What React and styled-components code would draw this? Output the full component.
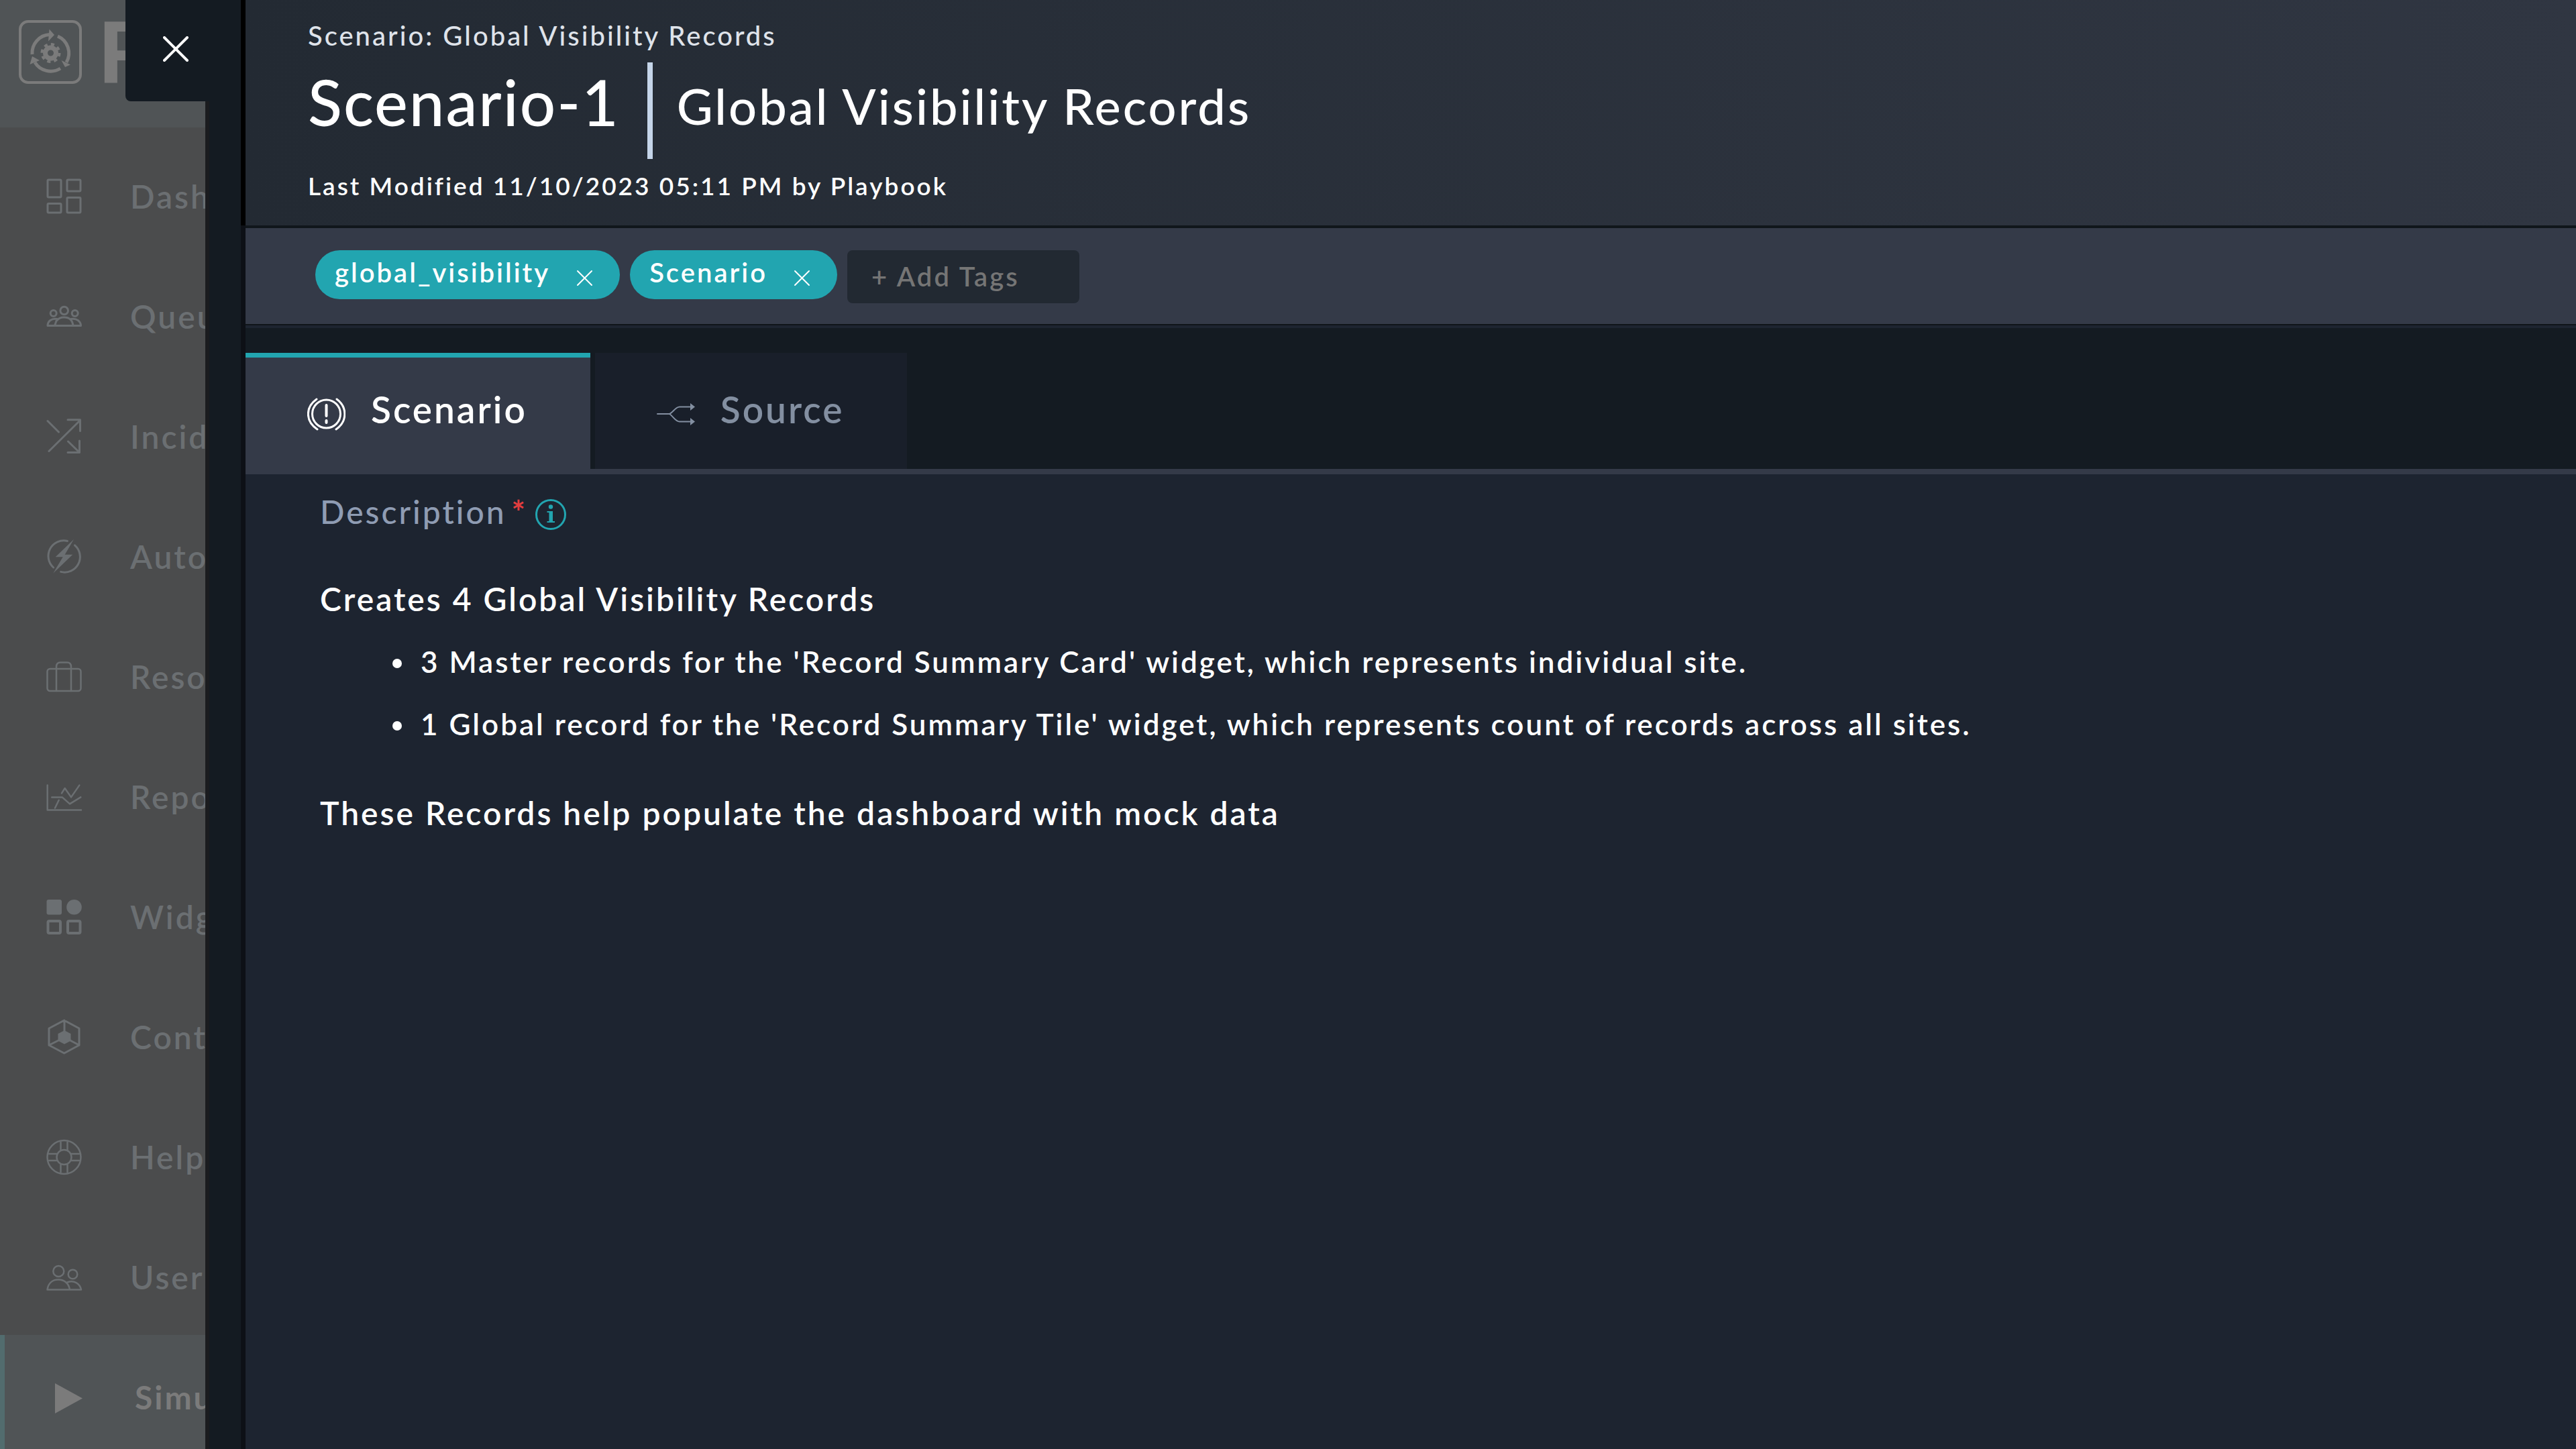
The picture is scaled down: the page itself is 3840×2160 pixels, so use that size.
import React, { useState } from "react";
import styled, { createGlobalStyle, css } from "styled-components";

const color = {
  teal: "#22a5b0",
  ink: "#141b22",
  panel: "#1d2430",
  bar: "#343a48",
  rail: "#4b4c4d",
  railRaised: "#505456",
  railText: "#6b6f72",
  muted: "#8f9cb3",
};

const GlobalStyle = createGlobalStyle`
  *, *::before, *::after { box-sizing: border-box; }
  body {
    margin: 0;
    background: ${color.panel};
    color: #fff;
    font-family: Lato, "Open Sans", sans-serif;
    font-weight: 600;
    letter-spacing: 3px;
  }
  button, input { font: inherit; letter-spacing: inherit; color: inherit; }
  h1, h2, p, ul { margin: 0; }
`;

const Page = styled.div`
  display: flex;
  height: 100vh;
  overflow: hidden;
`;

const Sidebar = styled.aside`
  flex: 0 0 306px;
  overflow: hidden;
  background: ${color.rail};
`;

const Brand = styled.div`
  display: flex;
  align-items: flex-start;
  gap: 25px;
  height: 190px;
  padding: 30px 0 0 28px;
  background: ${color.railRaised};
  color: #7b7b7b;
  font: 700 132px/95px "Liberation Sans", Arial, sans-serif;
`;

const NavList = styled.ul`
  padding: 10px 0 0;
  list-style: none;
`;

const NavLink = styled.a`
  display: flex;
  align-items: center;
  gap: 71px;
  height: 179px;
  padding: 7px 0 0 69px;
  color: ${color.railText};
  font-size: 48px;
  line-height: 60px;
  white-space: nowrap;
  text-decoration: none;

  svg { flex: none; }

  ${(p) =>
    p.$active &&
    css`
      border-left: 7px solid #526c6e;
      background: ${color.railRaised};
      color: #7b7b7b;
      font-weight: 700;
    `}
`;

const Gutter = styled.div`
  position: relative;
  flex: 0 0 53px;
  border-left: 6px solid #1b1c1f;
  background: ${color.ink};
`;

const CloseButton = styled.button`
  position: absolute;
  top: 0;
  right: 0;
  display: flex;
  align-items: center;
  width: 172px;
  height: 151px;
  padding: 0 0 6px 56px;
  border: 0;
  border-radius: 0 0 0 8px;
  background: ${color.ink};
  color: #fff;
`;

const Drawer = styled.main`
  display: flex;
  flex: 1;
  flex-direction: column;
  min-width: 0;
`;

const Header = styled.header`
  padding: 27px 93px 35px;
  border-left: 7px solid #000;
  background: linear-gradient(90deg, #232a33, #303642);
`;

const Crumb = styled.p`
  color: #dfe3ea;
  font-size: 40px;
  font-weight: 500;
  line-height: 52px;
`;

const TitleRow = styled.div`
  display: flex;
  align-items: flex-start;
  gap: 41px;
  margin: 14px 0 16px;
`;

const Title = styled.h1`
  font-size: 94px;
  font-weight: 500;
  letter-spacing: 2px;
  line-height: 118px;
`;

const Subtitle = styled.h2`
  padding: 0 0 14px 36px;
  border-left: 8px solid #c5d5e9;
  font-size: 74px;
  font-weight: 500;
  line-height: 130px;
`;

const Modified = styled.p`
  font-size: 37px;
  line-height: 48px;
`;

const Body = styled.div`
  flex: 1;
  border-left: 7px solid #0d1016;
  background: ${color.panel};
`;

const TagBar = styled.div`
  display: flex;
  align-items: flex-start;
  gap: 15px;
  padding: 33px 104px 31px;
  border-top: 4px solid #10161b;
  border-bottom: 2px solid #10151a;
  background: ${color.bar};
  font-size: 40px;
`;

const Tag = styled.span`
  display: flex;
  align-items: flex-start;
  gap: 39px;
  height: 73px;
  padding: 0 40px 0 29px;
  border-radius: 37px;
  background: ${color.teal};
  line-height: 67px;
`;

const TagRemove = styled.button`
  display: flex;
  padding: 29px 0 0;
  border: 0;
  background: none;
`;

const TagInput = styled.input`
  width: 346px;
  height: 79px;
  padding: 0 36px 2px;
  border: 0;
  border-radius: 8px;
  outline: 0;
  background: #222932;

  &::placeholder { color: #757575; opacity: 1; }
`;

const TabStrip = styled.div`
  display: flex;
  gap: 7px;
  margin-top: 4px;
  padding-top: 37px;
  border-bottom: 8px solid ${color.bar};
  background: ${color.ink};
`;

const Tab = styled.button`
  display: flex;
  align-items: center;
  gap: 38px;
  height: 173px;
  padding: 0 94px 0 92px;
  border: 0;
  border-top: 7px solid ${(p) => (p.$active ? color.teal : "transparent")};
  background: ${(p) => (p.$active ? color.bar : "#191f2a")};
  color: ${(p) => (p.$active ? "#fff" : "#838fa1")};
  font-size: 55px;
`;

const TabLabel = styled.span`
  padding-bottom: 12px;
  line-height: 68px;
`;

const Content = styled.section`
  padding: 26px 111px;
`;

const FieldLabel = styled.div`
  display: flex;
  align-items: center;
  margin-bottom: 70px;
  color: ${color.muted};
  font-size: 48px;
  font-weight: 500;
  line-height: 60px;
`;

const Required = styled.span`
  margin: 0 12px 0 8px;
  color: #e23d3f;
  font-weight: 700;
`;

const InfoButton = styled.button`
  display: flex;
  padding: 8px 0 0;
  border: 0;
  background: none;
  color: ${color.teal};
`;

const Paragraph = styled.p`
  font-size: 48px;
  line-height: 60px;
`;

const Bullets = styled.ul`
  margin: 17px 0 56px;
  padding-left: 143px;
  font-size: 44px;
  line-height: 93px;

  li { padding-left: 7px; }
`;

const Glyph = ({ w = 54, h = 54, stroke = 3, children }) => (
  <svg width={w} height={h} viewBox={`0 0 ${w} ${h}`} fill="none" stroke="currentColor"
    strokeWidth={stroke} strokeLinecap="round" strokeLinejoin="round" aria-hidden="true">
    {children}
  </svg>
);

const Cross = ({ size, stroke }) => (
  <Glyph w={size} h={size} stroke={stroke}>
    <path d={`M2 2L${size - 2} ${size - 2}M${size - 2} 2L2 ${size - 2}`} />
  </Glyph>
);

const Logo = () => (
  <Glyph w={94} h={95} stroke={5}>
    <rect x="2" y="2" width="90" height="91" rx="12" strokeWidth="4" />
    <g strokeLinecap="butt">
      <path d="M20 51A27.500 27.500 0 0 1 46 21.500" />
      <path d="M58 24A27.500 27.500 0 0 1 71 63" />
      <path d="M62 72A27.500 27.500 0 0 1 24 63" />
      <circle cx="47.500" cy="49" r="8" strokeWidth="7" />
      <circle cx="47.500" cy="49" r="13" strokeWidth="4" strokeDasharray="5.100 5.100" />
    </g>
    <g fill="currentColor" stroke="none">
      <path d="M45.500 13.500L53 22L44 31.500Z" />
      <path d="M63.500 60L77 66.500L69 70Z" />
      <path d="M20 54L16.500 66L31 60Z" />
    </g>
  </Glyph>
);

const icons = {
  dashboard: (
    <Glyph>
      <rect x="2" y="2" width="20" height="26" rx="1.500" />
      <rect x="31" y="2" width="20" height="17" rx="1.500" />
      <rect x="2" y="37.500" width="20" height="13.500" rx="1.500" />
      <rect x="31" y="28.500" width="20" height="22.500" rx="1.500" />
    </Glyph>
  ),
  queues: (
    <Glyph>
      <circle cx="26.700" cy="18" r="5.800" />
      <circle cx="10.700" cy="22" r="4.500" />
      <circle cx="42.700" cy="22" r="4.500" />
      <path d="M14 40.500H40C39 32 34 28 26.500 28C21.500 28 18 30 16 32.500" />
      <path d="M16 30.500C8 29 2 34 2 40.500H12.500L15.500 32" />
      <path d="M37 30.500C45 29 51.500 34 51.500 40.500H40" />
    </Glyph>
  ),
  incidents: (
    <Glyph>
      <path d="M2 3.500L18.500 20M4 48.500L50 3M32 1.700H50.500V18.500M32.500 34L49 50M32 50.500H49.500V33" />
    </Glyph>
  ),
  automation: (
    <Glyph>
      <path d="M31.500 3.500A23 23 0 0 0 10.700 43M42.500 9.800A23 23 0 0 1 21.700 49.400" />
      <path d="M41 1L13.700 27.300H24.700L10.300 51.600L39.300 23.700H27.700Z" fill="currentColor" stroke="none" />
    </Glyph>
  ),
  resources: (
    <Glyph stroke={2.5}>
      <rect x="1.500" y="15" width="50" height="33" rx="4" />
      <path d="M15 48V12Q15 5.500 21 5.500H31Q37 5.500 37 12V48" />
    </Glyph>
  ),
  reports: (
    <Glyph stroke={2.5}>
      <path d="M1.700 9.600V46.400H52M23 21.400L27.700 14L37 27.400L49.300 9.600M8.300 27.400H23.700L35 37.400L51.300 27.400M13 43.500L18.700 31.700" />
    </Glyph>
  ),
  widgets: (
    <Glyph stroke={4}>
      <rect x="0.500" y="1" width="22.500" height="22.500" rx="3" fill="currentColor" stroke="none" />
      <circle cx="41.500" cy="12.200" r="11.300" fill="currentColor" stroke="none" />
      <rect x="2.500" y="33" width="18.500" height="18" rx="2" />
      <rect x="32" y="33" width="18.500" height="18" rx="2" />
    </Glyph>
  ),
  content: (
    <Glyph>
      <path d="M26.700 2L49 14V39L26.700 51L4 39V14ZM27 2V19M20 31L4 39M34 31L49 39" />
      <path d="M27 17L36.500 22V32.500L27 37.500L17.500 32.500V22Z" fill="currentColor" stroke="none" />
    </Glyph>
  ),
  help: (
    <Glyph stroke={2.5}>
      <circle cx="26.500" cy="27" r="25" />
      <circle cx="26.500" cy="27" r="11" />
      <path d="M21.500 4.500V16.500M31.500 4.500V16.500M21.500 37.500V49.500M31.500 37.500V49.500M4 22H16M4 32H16M37 22H49M37 32H49" />
    </Glyph>
  ),
  users: (
    <Glyph stroke={2.5}>
      <circle cx="18.300" cy="18" r="8" />
      <circle cx="39.500" cy="22.500" r="6.800" />
      <path d="M1.500 45.500C3 36 9 30.500 18 30.500S33.500 36 35 45.500ZM31.500 34.500C41 31 50 36 52 45.500H35" />
    </Glyph>
  ),
  play: (
    <Glyph>
      <path d="M6 6L47 28.500L6 51Z" fill="currentColor" stroke="none" />
    </Glyph>
  ),
};

const AlertIcon = () => (
  <Glyph w={57} h={54}>
    <circle cx="28.500" cy="28" r="21" />
    <path d="M14 6C-3 18 -3 39 15 51M44 6C60 18 60 39 43 51" />
    <path d="M28.500 15V31M28.500 38V41" strokeWidth="4" />
  </Glyph>
);

const BranchIcon = () => (
  <Glyph w={57} h={54} stroke={2}>
    <path d="M1 28H19C24 26 28 17.500 34 17.500H50M19 28C24 31 28 39.500 34 39.500H50" />
    <path d="M50 12L57 17.500L50 23ZM50 34L57 39.500L50 45Z" fill="currentColor" stroke="none" />
  </Glyph>
);

const InfoIcon = () => (
  <Glyph w={46} h={46}>
    <circle cx="23" cy="23" r="21.500" />
    <circle cx="23" cy="11.500" r="3.200" fill="currentColor" stroke="none" />
    <path d="M17.500 18H26V33H29V35H17.500V33H20.500V20H17.500Z" fill="currentColor" stroke="none" />
  </Glyph>
);

const navItems = [
  ["Dashboard", "dashboard"],
  ["Queues", "queues"],
  ["Incidents", "incidents"],
  ["Automation", "automation"],
  ["Resources", "resources"],
  ["Reports", "reports"],
  ["Widgets", "widgets"],
  ["Content", "content"],
  ["Help", "help"],
  ["Users", "users"],
  ["Simulations", "play"],
];

const tabs = [
  ["Scenario", AlertIcon],
  ["Source", BranchIcon],
];

export default function App() {
  const [tags, setTags] = useState(["global_visibility", "Scenario"]);
  const [activeTab, setActiveTab] = useState("Scenario");

  return (
    <>
      <GlobalStyle />
      <Page>
        <Sidebar>
          <Brand>
            <Logo />
            <span>F</span>
          </Brand>
          <nav aria-label="Main">
            <NavList>
              {navItems.map(([label, icon]) => (
                <li key={label}>
                  <NavLink href="#" $active={icon === "play"}>
                    {icons[icon]}
                    <span>{label}</span>
                  </NavLink>
                </li>
              ))}
            </NavList>
          </nav>
        </Sidebar>
        <Gutter>
          <CloseButton type="button" aria-label="Close">
            <Cross size={38} stroke={4} />
          </CloseButton>
        </Gutter>
        <Drawer>
          <Header>
            <Crumb>Scenario: Global Visibility Records</Crumb>
            <TitleRow>
              <Title>Scenario-1</Title>
              <Subtitle>Global Visibility Records</Subtitle>
            </TitleRow>
            <Modified>Last Modified 11/10/2023 05:11 PM by Playbook</Modified>
          </Header>
          <Body>
            <TagBar>
              {tags.map((tag) => (
                <Tag key={tag}>
                  {tag}
                  <TagRemove
                    type="button"
                    aria-label={`Remove ${tag}`}
                    onClick={() => setTags(tags.filter((t) => t !== tag))}
                  >
                    <Cross size={25} stroke={2} />
                  </TagRemove>
                </Tag>
              ))}
              <TagInput aria-label="Add tags" placeholder="+ Add Tags" />
            </TagBar>
            <TabStrip role="tablist">
              {tabs.map(([label, Icon]) => (
                <Tab
                  key={label}
                  type="button"
                  role="tab"
                  aria-selected={label === activeTab}
                  $active={label === activeTab}
                  onClick={() => setActiveTab(label)}
                >
                  <Icon />
                  <TabLabel>{label}</TabLabel>
                </Tab>
              ))}
            </TabStrip>
            <Content>
              <FieldLabel>
                Description
                <Required>*</Required>
                <InfoButton type="button" aria-label="About this field">
                  <InfoIcon />
                </InfoButton>
              </FieldLabel>
              <Paragraph>Creates 4 Global Visibility Records</Paragraph>
              <Bullets>
                <li>3 Master records for the 'Record Summary Card' widget, which represents individual site.</li>
                <li>1 Global record for the 'Record Summary Tile' widget, which represents count of records across all sites.</li>
              </Bullets>
              <Paragraph>These Records help populate the dashboard with mock data</Paragraph>
            </Content>
          </Body>
        </Drawer>
      </Page>
    </>
  );
}
